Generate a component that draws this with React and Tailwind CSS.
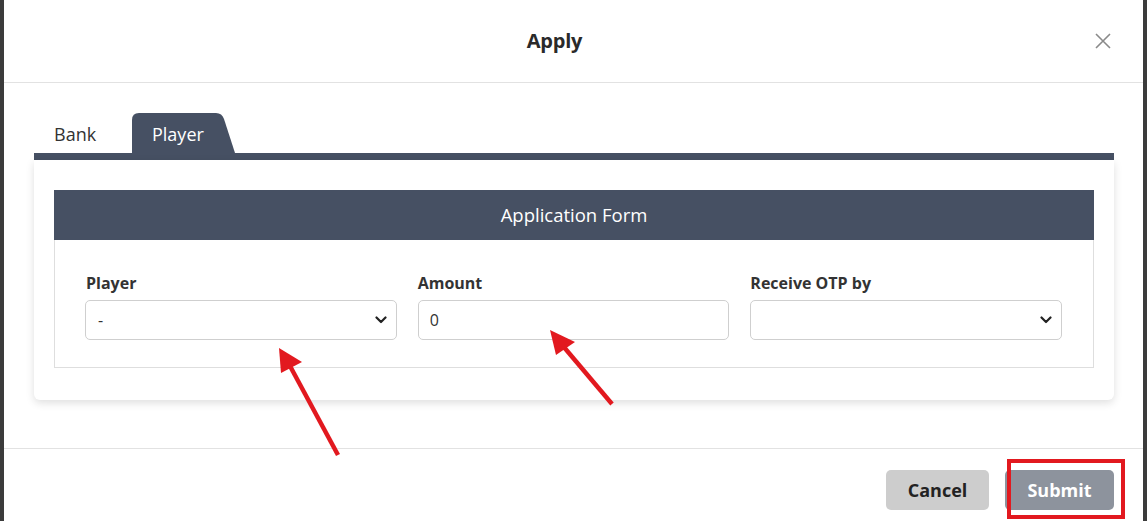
import React from "react";

function Chevron() {
  return (
    <svg width="12" height="8" viewBox="0 0 12 8" className="absolute right-[10px] top-1/2 -translate-y-1/2 pointer-events-none">
      <path d="M1.5 1.5 L6 6 L10.5 1.5" fill="none" stroke="#222" strokeWidth="2.2" strokeLinecap="round" strokeLinejoin="round" />
    </svg>
  );
}

export default function App() {
  const font = { fontFamily: '"Open Sans", "Noto Sans", Arial, sans-serif' };
  return (
    <div className="relative w-[1147px] h-[521px] overflow-hidden bg-[#3b3b3b] flex" style={font}>
      <div className="ml-[4px] w-[1139px] h-[521px] bg-white flex flex-col">
        {/* header */}
        <div className="relative h-[83px] shrink-0 border-b border-[#e2e2e2] flex items-center justify-center pr-[38px]">
          <h1 className="text-[20px] font-bold text-[#2a2a2a] tracking-[-0.2px]">Apply</h1>
          <button className="absolute right-[32px] top-[33px] w-[16px] h-[16px]">
            <svg width="16" height="16" viewBox="0 0 16 16">
              <path d="M1 1 L15 15 M15 1 L1 15" stroke="#8a8a8a" strokeWidth="1.6" />
            </svg>
          </button>
        </div>

        {/* body */}
        <div className="pl-[30px] pr-[29px] pt-[30px] h-[366px] shrink-0 border-b border-[#e2e2e2]">
          {/* tabs */}
          <div className="flex items-end h-[40px]">
            <div className="w-[98px] h-[40px] flex items-center pl-[20px] pt-[3px] text-[18px] text-[#333]">Bank</div>
            <div className="relative w-[104px] h-[40px] flex items-center pl-[20px] pt-[3px] text-[18px] text-white">
              <svg width="104" height="40" viewBox="0 0 104 40" className="absolute left-0 top-0">
                <path d="M0 7 Q0 0 7 0 L84 0 Q90 0 92 6 L103 40 L0 40 Z" fill="#465063" />
              </svg>
              <span className="relative">Player</span>
            </div>
          </div>
          <div className="h-[7px] bg-[#465063] w-[1080px]" />
          {/* card */}
          <div className="w-[1080px] bg-white rounded-b-[6px] shadow-[0_3px_8px_rgba(0,0,0,0.13)] px-[20px] pt-[30px] pb-[32px]">
            <div className="h-[50px] bg-[#465063] flex items-center justify-center text-white text-[18.5px]">
              Application Form
            </div>
            <div className="border border-t-0 border-[#dedede] h-[128px] pl-[30px] pr-[31px] pt-[32px] grid grid-cols-3 gap-x-[21px]">
              <div className="flex flex-col">
                <label className="text-[16px] font-bold text-[#333] leading-[22px] mb-[6px] pl-[1px]">Player</label>
                <div className="relative">
                  <select className="appearance-none w-full h-[40px] border border-[#cfcfcf] rounded-[5px] pl-[12px] text-[16px] text-[#333] bg-white">
                    <option>-</option>
                  </select>
                  <Chevron />
                </div>
              </div>
              <div className="flex flex-col">
                <label className="text-[16px] font-bold text-[#333] leading-[22px] mb-[6px]">Amount</label>
                <input
                  defaultValue="0"
                  className="w-full h-[40px] border border-[#cfcfcf] rounded-[5px] pl-[11px] text-[16px] text-[#333] bg-white"
                />
              </div>
              <div className="flex flex-col">
                <label className="text-[16px] font-bold text-[#333] leading-[22px] mb-[6px]">Receive OTP by</label>
                <div className="relative">
                  <select className="appearance-none w-full h-[40px] border border-[#cfcfcf] rounded-[5px] pl-[12px] text-[16px] text-[#333] bg-white">
                    <option></option>
                  </select>
                  <Chevron />
                </div>
              </div>
            </div>
          </div>
        </div>

        {/* footer */}
        <div className="flex justify-end items-start pt-[21px] pr-[29px] gap-[16px]">
          <button className="w-[103px] h-[40px] rounded-[5px] bg-[#cdcdcd] text-[18px] font-bold text-[#222]">Cancel</button>
          <button className="w-[109px] h-[40px] rounded-[5px] bg-[#8d939d] text-[18px] font-bold text-white">Submit</button>
        </div>
      </div>

      {/* annotation: red box */}
      <div className="absolute left-[1007px] top-[459px] w-[118px] h-[60px] border-[4px] border-[#e2191f] pointer-events-none" />

      {/* annotation: arrows */}
      <svg className="absolute left-0 top-0 pointer-events-none" width="1147" height="521" viewBox="0 0 1147 521">
        <line x1="338" y1="455" x2="290" y2="366" stroke="#e2191f" strokeWidth="4.5" />
        <polygon points="279,348 281,373 302,362" fill="#e2191f" />
        <line x1="612" y1="404" x2="563" y2="346" stroke="#e2191f" strokeWidth="4.5" />
        <polygon points="550,330 556,355 575,342" fill="#e2191f" />
      </svg>
    </div>
  );
}
